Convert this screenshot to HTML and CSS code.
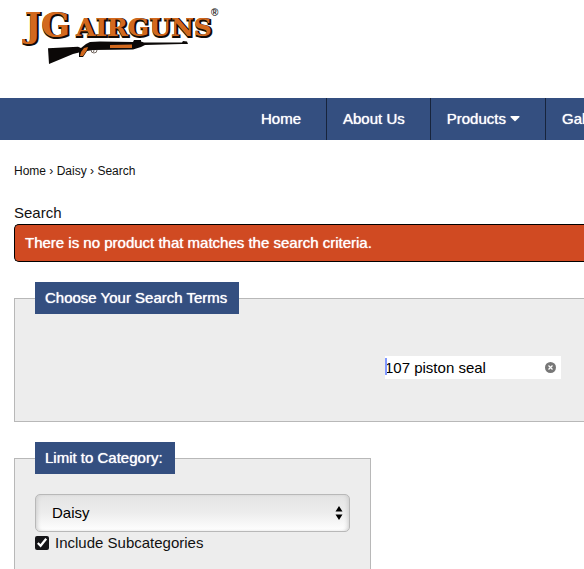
FILE: index.html
```html
<!DOCTYPE html>
<html lang="en">
<head>
<meta charset="utf-8">
<title>Search - JG Airguns</title>
<link rel="stylesheet" href="styles.css">
</head>
<body>
<header class="header">
  <a class="logo" href="#" aria-label="JG Airguns">
    <svg width="206" height="62" viewBox="14 6 206 62">
      <g class="logo-shadow">
        <text class="logo-big" x="26" y="38">JG</text>
        <text class="logo-small" x="77" y="37">AIRGUNS</text>
      </g>
      <g class="logo-face">
        <text class="logo-big" x="25" y="37">JG</text>
        <text class="logo-small" x="76" y="36">AIRGUNS</text>
      </g>
      <text class="logo-mark" x="211" y="16">®</text>
      <path fill="#0b0807" d="M48 48.300L78 46.800L81 48L86 44L90 42L100 41.500L133 42L134 40L141 40L141 41.500L144 42.500L182 42.500L183 41L187 41.500L188 44L182 44L145 45L141 47L133 49.500L93 50L87 51L83 57L79 57L79 52.500L73 54L49 64Z"/>
      <path fill="#d2691e" d="M84 48L88 47L87 50L83 56L80 56L81 52ZM110 45L132 44.600L132 48L110 48Z"/>
      <path fill="none" stroke="#39291f" stroke-width=".7" d="M91 50Q91 53 94 53Q97 53 97 50M94 50L93.500 52"/>
    </svg>
  </a>
</header>
<nav class="nav">
  <a class="nav-link" href="#">Home</a>
  <a class="nav-link" href="#">About Us</a>
  <a class="nav-link" href="#">Products
    <svg class="nav-caret" width="10" height="6" viewBox="0 0 10 6"><path fill="#fff" d="M1 0H9Q10 .3 9.500 1L5.500 5Q5 5.400 4.500 5L.5 1Q0 .3 1 0Z"/></svg>
  </a>
  <a class="nav-link" href="#">Gallery</a>
</nav>
<main class="main">
  <div class="crumbs"><a href="#">Home</a> › <a href="#">Daisy</a> › <a href="#">Search</a></div>
  <h1 class="title">Search</h1>
  <div class="message">There is no product that matches the search criteria.</div>
  <form>
    <fieldset class="panel terms">
      <legend class="legend">Choose Your Search Terms</legend>
      <div class="search">
        <span class="cursor"></span>
        <input class="search-input" type="text" aria-label="Search terms" value="107 piston seal">
        <button class="clear" type="button" aria-label="Clear">
          <svg width="11" height="11" viewBox="0 0 11 11"><circle cx="5.500" cy="5.500" r="5.500" fill="#777"/><path d="M3.500 3.500L7.500 7.500M7.500 3.500L3.500 7.500" stroke="#fff" stroke-width="1.200"/></svg>
        </button>
      </div>
    </fieldset>
    <fieldset class="panel category">
      <legend class="legend">Limit to Category:</legend>
      <div class="select-wrap">
        <select class="select" aria-label="Category"><option>Daisy</option></select>
        <svg class="arrows" width="8" height="14" viewBox="0 0 8 14"><path fill="#000" d="M4 0L7.500 5.500H.5ZM.5 8.500H7.500L4 14Z"/></svg>
      </div>
      <div class="check-row">
        <input class="check" type="checkbox" id="subs" checked>
        <label for="subs">Include Subcategories</label>
      </div>
    </fieldset>
  </form>
</main>
</body>
</html>
```
FILE: styles.css
```css
* { box-sizing: border-box; }
html { overflow: hidden; }
body {
  margin: 0;
  background: #fff;
  color: #111;
  font: 15px/22px "Liberation Sans", Arial, sans-serif;
}
a { color: inherit; text-decoration: none; }
.header { height: 98px; padding: 6px 14px; }
.logo, .logo svg { display: block; }
.logo text { font-family: "DejaVu Serif", serif; font-weight: bold; }
.logo-big { font-size: 34px; }
.logo-small { font-size: 25px; }
.logo-shadow { fill: #130b06; stroke: #130b06; stroke-width: 2px; }
.logo-face { fill: #d2691e; stroke: #d2691e; stroke-width: 0; }
.logo .logo-mark { font-family: "Liberation Sans", sans-serif; font-size: 10px; fill: #222; }
.nav {
  display: flex;
  height: 42px;
  padding-left: 245px;
  overflow: hidden;
  background: #344f80;
}
.nav-link {
  flex: none;
  padding: 0 25px 0 16px;
  border-right: 1px solid #17243c;
  color: #fff;
  line-height: 42px;
  text-shadow: 0 0 1px #fff;
}
.nav-caret { vertical-align: 2px; }
.main { padding: 20px 0 0 14px; }
.crumbs { font-size: 12px; margin-bottom: 20px; }
.title { margin: 0; font-size: 15px; font-weight: normal; }
.message {
  margin-bottom: 20px;
  padding: 7px 10px;
  border: 1px solid #000;
  border-right: 0;
  border-radius: 5px 0 0 5px;
  background: #d04a22;
  color: #fff;
  text-shadow: 0 0 1px #fff;
}
.panel {
  margin: 0 0 20px;
  border: 1px solid #b8b8b8;
  background: #ededed;
}
.terms {
  padding: 42px 23px 42px 20px;
  border-right: 0;
}
.category { max-width: 357px; padding: 20px; }
.legend {
  padding: 5px 12px 5px 10px;
  background: #344f80;
  color: #fff;
  text-shadow: 0 0 1px #fff;
}
.search {
  position: relative;
  display: flex;
  align-items: center;
  width: 176px;
  height: 23px;
  margin-left: auto;
  padding-right: 5px;
  background: #fff;
}
.cursor {
  position: absolute;
  left: 0;
  top: 2px;
  width: 2px;
  height: 17px;
  background: #8098ff;
}
.search-input {
  flex: 1;
  min-width: 0;
  padding: 0;
  border: 0;
  background: transparent;
  color: #000;
  font: inherit;
}
.clear { display: flex; padding: 0; border: 0; background: none; }
.select-wrap { position: relative; }
.select {
  display: block;
  width: 100%;
  height: 38px;
  padding: 0 16px;
  border: 1px solid #b8b8b8;
  border-radius: 5px;
  appearance: none;
  background: linear-gradient(#e4e4e4, #ededed 50%, #fff);
  box-shadow: inset 3px 0 4px -2px #ccc, inset -3px 0 4px -2px #ccc;
  color: #000;
  font: inherit;
}
.arrows { position: absolute; right: 7px; top: 12px; pointer-events: none; }
.check-row { display: flex; align-items: center; gap: 6px; }
.check { width: 14px; height: 14px; margin: 0; accent-color: #151518; }
```
